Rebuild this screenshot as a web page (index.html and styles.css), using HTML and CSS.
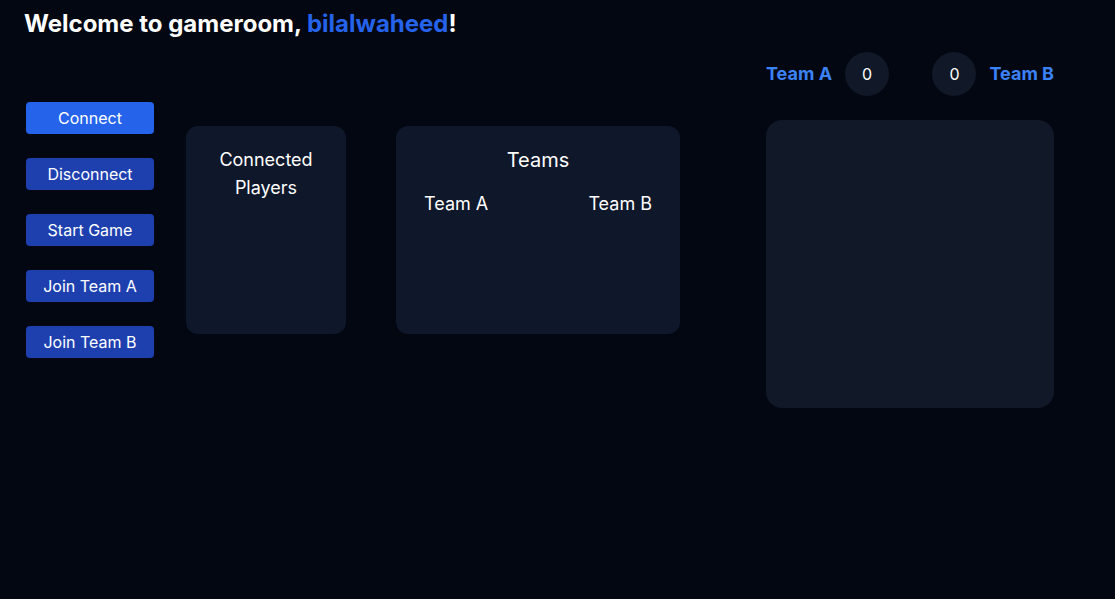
FILE: index.html
```html
<!DOCTYPE html>
<html lang="en">
<head>
<meta charset="utf-8">
<title>Gameroom</title>
<link rel="stylesheet" href="styles.css">
</head>
<body>
<div class="page">
  <h1 class="title">Welcome to gameroom, <span class="name">bilalwaheed</span>!</h1>
  <div class="main">
    <div class="actions">
      <button class="btn btn-primary">Connect</button>
      <button class="btn">Disconnect</button>
      <button class="btn">Start Game</button>
      <button class="btn">Join Team A</button>
      <button class="btn">Join Team B</button>
    </div>
    <div class="card players">
      <div class="card-title">Connected Players</div>
    </div>
    <div class="card teams">
      <div class="teams-title">Teams</div>
      <div class="teams-row">
        <span class="team-name">Team A</span>
        <span class="team-name">Team B</span>
      </div>
    </div>
    <div class="side">
      <div class="scores">
        <div class="score-group">
          <span class="score-label">Team A</span>
          <span class="score">0</span>
        </div>
        <div class="score-group">
          <span class="score">0</span>
          <span class="score-label">Team B</span>
        </div>
      </div>
      <div class="board"></div>
    </div>
  </div>
</div>
</body>
</html>
```

FILE: styles.css
```css
* { box-sizing: border-box; }
html, body {
  margin: 0;
  height: 100%;
  background: #030712;
  color: #ffffff;
  font-family: Inter, "Noto Sans", sans-serif;
}
.page {
  padding: 8px 24px 0 24px;
}
.title {
  margin: 0;
  font-size: 24px;
  line-height: 32px;
  font-weight: 700;
}
.name { color: #2563eb; }
.main {
  display: flex;
  align-items: flex-start;
  margin-top: 12px;
}
.actions {
  display: flex;
  flex-direction: column;
  gap: 24px;
  margin-top: 50px;
  margin-left: 2px;
  width: 128px;
}
.btn {
  height: 32px;
  width: 128px;
  border: 0;
  border-radius: 4px;
  background: #1e40af;
  color: #ffffff;
  font-family: Inter, "Noto Sans", sans-serif;
  font-size: 16px;
  padding: 0;
}
.btn-primary { background: #2563eb; }
.card {
  background: #0f172a;
  border-radius: 12px;
  height: 208px;
  margin-top: 74px;
  padding: 20px;
  text-align: center;
}
.players {
  width: 160px;
  margin-left: 32px;
}
.card-title {
  font-size: 18px;
  line-height: 28px;
}
.teams {
  width: 284px;
  margin-left: 50px;
}
.teams-title {
  font-size: 20px;
  line-height: 28px;
}
.teams-row {
  display: flex;
  justify-content: space-between;
  margin-top: 16px;
  padding: 0 8px;
}
.team-name {
  font-size: 18px;
  line-height: 28px;
}
.side {
  width: 288px;
  margin-left: 86px;
  display: flex;
  flex-direction: column;
  gap: 24px;
}
.scores {
  display: flex;
  justify-content: space-between;
  align-items: center;
}
.score-group {
  display: flex;
  align-items: center;
  gap: 13px;
}
.score-label {
  color: #3b82f6;
  font-weight: 700;
  font-size: 18px;
  line-height: 28px;
}
.score {
  width: 44px;
  height: 44px;
  border-radius: 50%;
  background: #111827;
  display: flex;
  align-items: center;
  justify-content: center;
  font-size: 16px;
}
.board {
  width: 288px;
  height: 288px;
  background: #111827;
  border-radius: 16px;
}
```
